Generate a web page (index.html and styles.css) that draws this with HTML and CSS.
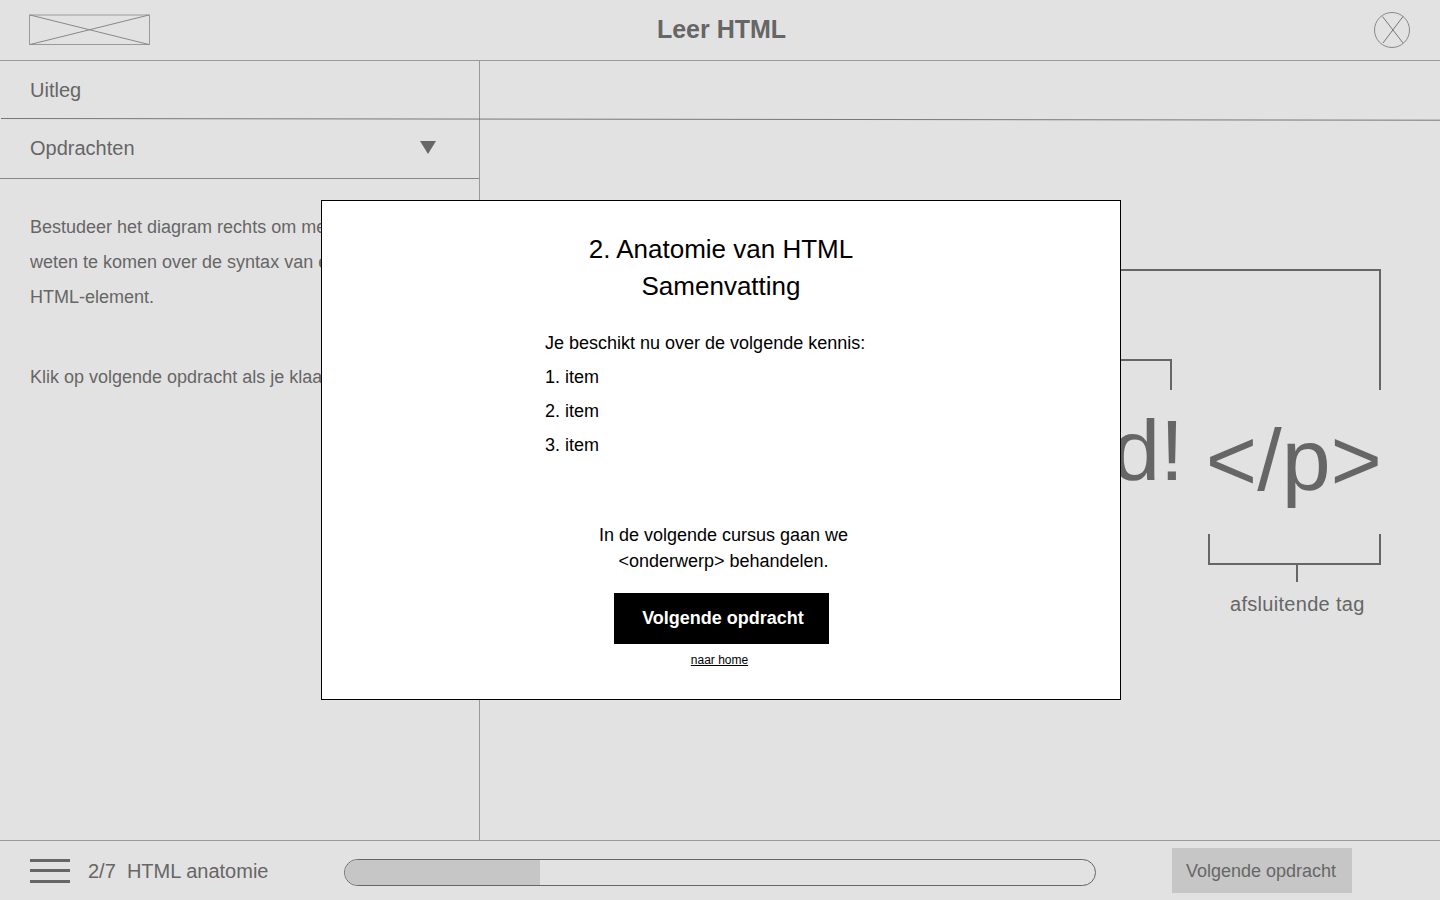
FILE: index.html
```html
<!DOCTYPE html>
<html lang="nl">
<head>
	<meta charset="UTF-8">
	<title>Leer HTML</title>
	<link rel="stylesheet" href="styles.css">
</head>
<body>
	<div class="page">
		<header class="top">
			<svg class="logo" width="122" height="32" viewBox="0 0 122 32">
				<rect x="0.5" y="1" width="120" height="29.5" fill="none" stroke="#999" stroke-width="1"/>
				<path d="M1 1 L120 30.5 M120 1 L1 30.5" fill="none" stroke="#888" stroke-width="1"/>
			</svg>
			<h1 class="title">Leer HTML</h1>
			<svg class="close" width="38" height="38" viewBox="0 0 38 38">
				<circle cx="19" cy="18" r="17.5" fill="none" stroke="#888" stroke-width="1"/>
				<path d="M9.5 4.5 L30 31 M30 4.5 L10 31" fill="none" stroke="#777" stroke-width="1"/>
			</svg>
		</header>

		<div class="middle">
			<aside class="side">
				<div class="tab tab-first">Uitleg</div>
				<div class="tab tab-second">
					Opdrachten
					<span class="arrow"></span>
				</div>
				<div class="side-text">
					<p>Bestudeer het diagram rechts om meer te<br>weten te komen over de syntax van een<br>HTML-element.</p>
					<p class="side-last">Klik op volgende opdracht als je klaar bent.</p>
				</div>
			</aside>
			<main class="canvas">
				<div class="bracket bracket-outer"></div>
				<div class="bracket bracket-inner"></div>
				<div class="code code-body">World!</div>
				<div class="code code-close">&lt;/p&gt;</div>
				<div class="bracket bracket-close"></div>
				<div class="stem"></div>
				<div class="label">afsluitende tag</div>
			</main>
		</div>

		<footer class="bottom">
			<div class="burger"><span></span><span></span><span></span></div>
			<div class="step">2/7&nbsp; HTML anatomie</div>
			<div class="progress"><div class="progress-fill"></div></div>
			<div class="next">Volgende opdracht</div>
		</footer>

		<svg class="sketch-line" width="1440" height="4" viewBox="0 0 1440 4">
			<path d="M1 0.5 L1440 2.2" fill="none" stroke="#777" stroke-width="1"/>
		</svg>

		<section class="modal">
			<h2 class="modal-title">2. Anatomie van HTML<br>Samenvatting</h2>
			<div class="modal-list">
				<p>Je beschikt nu over de volgende kennis:</p>
				<p>1. item</p>
				<p>2. item</p>
				<p>3. item</p>
			</div>
			<p class="modal-next">In de volgende cursus gaan we<br>&lt;onderwerp&gt; behandelen.</p>
			<a class="modal-btn">Volgende opdracht</a>
			<a class="modal-home">naar home</a>
		</section>
	</div>
</body>
</html>
```

FILE: styles.css
```css
*{
	margin: 0;
	padding: 0;
	box-sizing: border-box;
}
body{
	background: #e2e2e2;
	color: #666;
	font-family: "Liberation Sans", Arial, sans-serif;
	overflow: hidden;
}
.page{
	position: relative;
	width: 1440px;
	height: 900px;
	display: flex;
	flex-direction: column;
}

/* top bar */
.top{
	height: 61px;
	padding: 14px 29px 0 29px;
	display: grid;
	grid-template-columns: 1fr auto 1fr;
	align-items: start;
	border-bottom: 1px solid #999;
}
.title{
	font-size: 25px;
	font-weight: bold;
	line-height: 30px;
	margin-left: 3px;
}
.close{
	justify-self: end;
	margin-top: -2px;
}

/* middle */
.middle{
	flex: 1;
	display: flex;
	min-height: 0;
}
.side{
	width: 480px;
	border-right: 1px solid #999;
}
.tab{
	display: flex;
	justify-content: space-between;
	align-items: center;
	padding: 0 43px 0 30px;
	font-size: 20px;
}
.tab-first{
	height: 58px;
}
.tab-second{
	height: 60px;
	border-bottom: 1px solid #888;
}
.arrow{
	width: 0;
	height: 0;
	margin-top: -3px;
	border-left: 8px solid transparent;
	border-right: 8px solid transparent;
	border-top: 13px solid #666;
}
.side-text{
	padding: 31px 0 0 30px;
	font-size: 18px;
	line-height: 35px;
	white-space: nowrap;
}
.side-last{
	margin-top: 45px;
}

/* diagram */
.canvas{
	position: relative;
	flex: 1;
}
.bracket{
	position: absolute;
	border-color: #666;
	border-style: solid;
	border-width: 0;
}
.bracket-outer{
	left: 300px;
	top: 208px;
	width: 601px;
	height: 121px;
	border-width: 2px 2px 0 0;
}
.bracket-inner{
	left: 400px;
	top: 298px;
	width: 292px;
	height: 31px;
	border-width: 2px 2px 0 0;
}
.bracket-close{
	left: 728px;
	top: 473px;
	width: 173px;
	height: 31px;
	border-width: 0 2px 2px 2px;
}
.stem{
	position: absolute;
	left: 816px;
	top: 504px;
	width: 2px;
	height: 17px;
	background: #666;
}
.code{
	position: absolute;
	line-height: 100px;
	white-space: nowrap;
}
.code-body{
	right: 256px;
	top: 339px;
	font-size: 86px;
}
.code-close{
	right: 58px;
	top: 349px;
	font-size: 88px;
}
.label{
	position: absolute;
	left: 750px;
	top: 531px;
	font-size: 20px;
	line-height: 24px;
	letter-spacing: 0.3px;
}

/* bottom bar */
.bottom{
	height: 60px;
	display: flex;
	align-items: center;
	padding-left: 30px;
	border-top: 1px solid #999;
}
.burger{
	width: 40px;
	height: 24px;
	display: flex;
	flex-direction: column;
	justify-content: space-between;
}
.burger span{
	height: 3px;
	background: #666;
}
.step{
	width: 256px;
	margin: 2px 0 0 18px;
	font-size: 20px;
}
.progress{
	width: 752px;
	height: 27px;
	margin-top: 4px;
	border: 1px solid #666;
	border-radius: 14px;
	overflow: hidden;
}
.progress-fill{
	width: 195px;
	height: 100%;
	background: #c6c6c6;
}
.next{
	width: 180px;
	height: 45px;
	margin-left: 76px;
	padding-right: 2px;
	background: #c6c6c6;
	font-size: 18px;
	line-height: 47px;
	text-align: center;
}

/* line that runs a bit crooked in the sketch */
.sketch-line{
	position: absolute;
	left: 0;
	top: 118px;
}

/* modal */
.modal{
	position: absolute;
	left: 321px;
	top: 200px;
	width: 800px;
	height: 500px;
	padding-top: 30px;
	background: #fff;
	border: 1px solid #000;
	color: #000;
	display: flex;
	flex-direction: column;
	align-items: center;
}
.modal-title{
	font-size: 26px;
	font-weight: normal;
	line-height: 37px;
	text-align: center;
}
.modal-list{
	align-self: flex-start;
	margin: 21px 0 0 223px;
	font-size: 18px;
	line-height: 34px;
}
.modal-next{
	margin: 60px 0 0 5px;
	font-size: 18px;
	line-height: 26px;
	text-align: center;
}
.modal-btn{
	width: 215px;
	height: 51px;
	margin-top: 19px;
	background: #000;
	color: #fff;
	font-size: 18px;
	font-weight: bold;
	line-height: 51px;
	text-align: center;
	padding-left: 4px;
}
.modal-home{
	margin: 9px 0 0 -3px;
	font-size: 12px;
	line-height: 14px;
	text-decoration: underline;
}
```
